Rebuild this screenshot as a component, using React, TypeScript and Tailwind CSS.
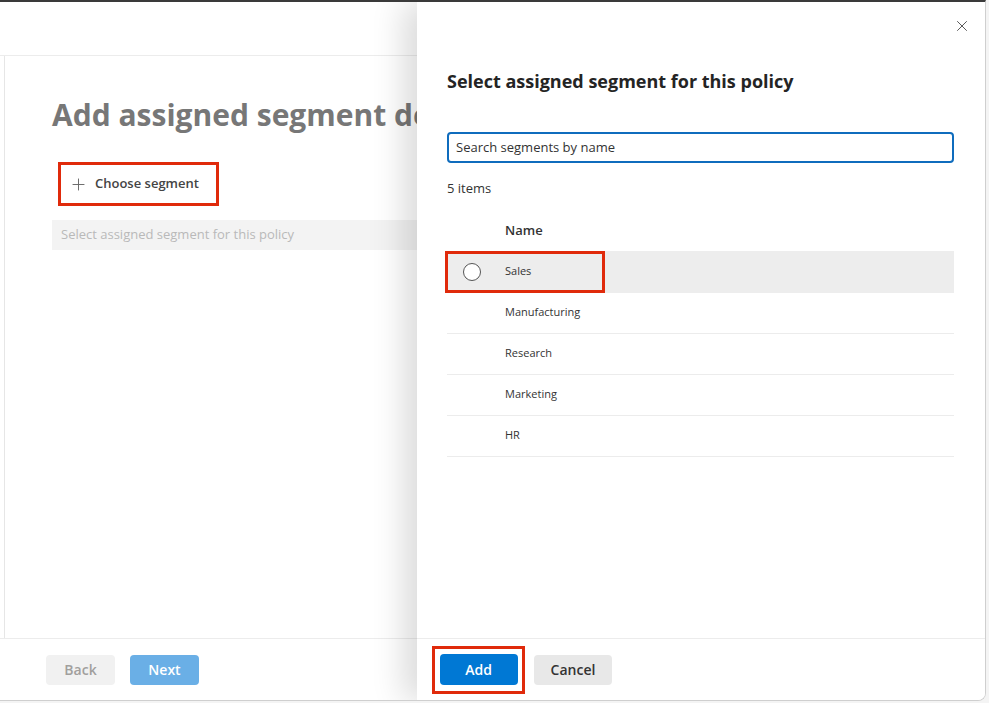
import { Plus, X } from "lucide-react";

const font = { fontFamily: "'Segoe UI', 'Open Sans', 'Noto Sans', sans-serif" };

const segments = ["Sales", "Manufacturing", "Research", "Marketing", "HR"];

/* Page behind the panel */
function WizardPage() {
  return (
    <div className="flex h-full flex-col">
      <div className="h-[54px] border-b border-[#ececec]" />
      <div className="flex flex-1 pl-1">
        <div className="flex-1 border-l border-[#e6e6e6] pl-[47px] pt-[36px]">
          <h1 className="whitespace-nowrap text-[30px] font-bold text-[#777777]">
            Add assigned segment details
          </h1>
          <div className="mt-[25px] ml-[6px] flex h-[44px] w-[161px] items-center gap-[7px] border-[3px] border-[#e02a0b] pl-[8px] text-[13px] font-semibold text-[#444]">
            <Plus className="h-[19px] w-[19px] text-[#666]" strokeWidth={1.2} />
            Choose segment
          </div>
          <div className="mt-[14px] flex h-[30px] w-[600px] items-center bg-[#f3f3f3] pl-[9px] text-[13px] text-[#b9b9b9]">
            Select assigned segment for this policy
          </div>
        </div>
      </div>
      <div className="flex h-[62px] items-center gap-[15px] border-t border-[#ececec] pl-[46px]">
        <button className="h-[30px] w-[69px] rounded-sm bg-[#f1f1f1] text-[14px] font-semibold text-[#a19f9d]">
          Back
        </button>
        <button className="h-[30px] w-[69px] rounded-sm bg-[#6aafe6] text-[14px] font-semibold text-white">
          Next
        </button>
      </div>
    </div>
  );
}

/* Side panel */
function SegmentPanel() {
  return (
    <div className="absolute bottom-0 right-0 top-0 flex w-[568px] flex-col bg-white shadow-[-14px_0_30px_rgba(0,0,0,0.14)]">
      <div className="flex-1 pl-[30px] pr-[31px]">
        <div className="flex justify-end pt-[15px]">
          <X className="mr-[-17px] h-[18px] w-[18px] text-[#555]" strokeWidth={1.3} />
        </div>
        <h2 className="mt-[33px] text-[18px] font-bold text-[#242424]">
          Select assigned segment for this policy
        </h2>
        <div className="mt-[37px] flex h-[31px] items-center rounded-sm border-2 border-[#0f6cbd] pl-[7px] text-[13px] text-[#333]">
          Search segments by name
        </div>
        <div className="mt-[16px] text-[13px] text-[#333]">5 items</div>
        <div className="mt-[20px] flex h-[25px] items-center pl-[58px] text-[13px] font-semibold text-[#333]">
          Name
        </div>
        <div className="mt-[7px]">
          {segments.map((name, i) => (
            <div
              key={name}
              className={
                i === 0
                  ? "relative flex h-[42px] items-center bg-[#ededed] pl-[58px] text-[11px] text-[#333]"
                  : "flex h-[41px] items-center border-b border-[#ececec] pl-[58px] text-[11px] text-[#333]"
              }
            >
              {i === 0 && (
                <>
                  <span className="absolute left-[16px] top-[12px] h-[18px] w-[18px] rounded-full border-[1.5px] border-[#555] bg-white" />
                  <span className="absolute -left-[2px] top-0 h-[42px] w-[160px] border-[3px] border-[#e02a0b]" />
                </>
              )}
              {name}
            </div>
          ))}
        </div>
      </div>
      <div className="flex h-[62px] items-center gap-[9px] border-t border-[#ececec] pl-[15px]">
        <div className="flex h-[48px] w-[93px] items-center justify-center border-[3px] border-[#e02a0b]">
          <button className="h-[31px] w-[78px] rounded-sm bg-[#0078d4] text-[14px] font-semibold text-white">
            Add
          </button>
        </div>
        <button className="h-[30px] w-[78px] rounded-sm bg-[#e8e8e8] text-[14px] font-semibold text-[#333]">
          Cancel
        </button>
      </div>
    </div>
  );
}

export default function App() {
  return (
    <div className="h-[703px] w-[989px] overflow-hidden bg-[#f4f4f4]" style={font}>
      <div className="relative h-[701px] w-[986px] overflow-hidden rounded-br-lg border-r border-b border-t-2 border-r-[#cfcfcf] border-b-[#cfcfcf] border-t-[#3a3a3a] bg-white">
        <WizardPage />
        <SegmentPanel />
      </div>
    </div>
  );
}
